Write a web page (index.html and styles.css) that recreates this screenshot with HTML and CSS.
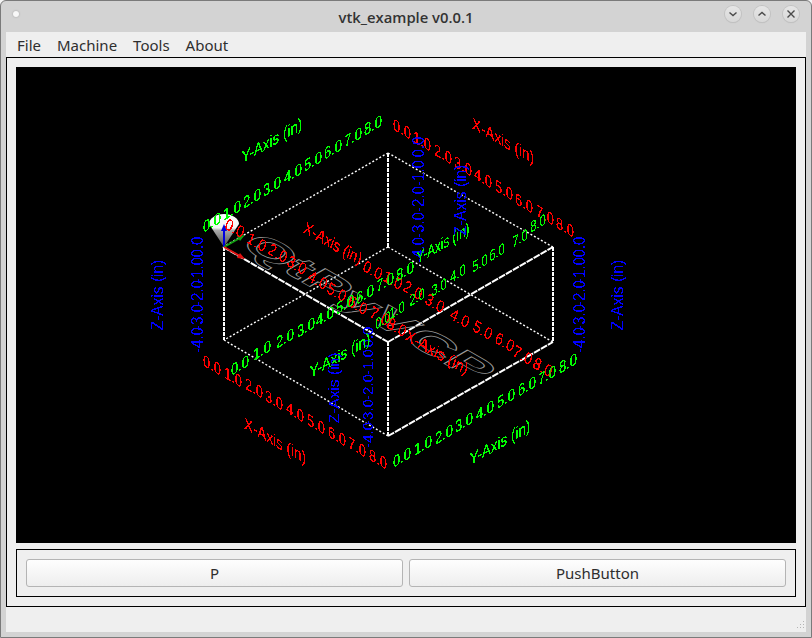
FILE: index.html
```html
<!DOCTYPE html>
<html lang="en">
<head>
    <meta charset="UTF-8">
    <title>vtk_example v0.0.1</title>
    <link rel="stylesheet" href="styles.css">
</head>
<body>
    <div class="window">
        <div class="titlebar">
            <span class="title-dot"></span>
            <span class="title">vtk_example v0.0.1</span>
            <div class="title-buttons">
                <span class="wm-button"><svg width="10" height="10" viewBox="0 0 10 10"><path d="M1.5 3.5 5 6.5 8.5 3.5"/></svg></span>
                <span class="wm-button"><svg width="10" height="10" viewBox="0 0 10 10"><path d="M1.5 6.5 5 3.5 8.5 6.5"/></svg></span>
                <span class="wm-button"><svg width="10" height="10" viewBox="0 0 10 10"><path d="M1.5 1.5 8.5 8.5M8.5 1.5 1.5 8.5"/></svg></span>
            </div>
        </div>
        <div class="client">
            <div class="menubar">
                <span class="menu-item">File</span>
                <span class="menu-item">Machine</span>
                <span class="menu-item">Tools</span>
                <span class="menu-item">About</span>
            </div>
            <div class="frame">
                <div class="viewport">
                    <svg class="scene" width="780" height="476" viewBox="16 67 780 476">
                        <defs>
                            <filter id="alias" x="0" y="0" width="100%" height="100%" filterUnits="userSpaceOnUse" primitiveUnits="userSpaceOnUse" color-interpolation-filters="sRGB">
                                <feComponentTransfer><feFuncA type="discrete" tableValues="0 0 1 1 1"/></feComponentTransfer>
                            </filter>
                            <linearGradient id="cone-top" x1="0" y1="0" x2="0" y2="1">
                                <stop offset="0" stop-color="#ffffff"/>
                                <stop offset="0.42" stop-color="#f4f4f4"/>
                                <stop offset="0.5" stop-color="#a8a8a8"/>
                                <stop offset="1" stop-color="#4a4a4a"/>
                            </linearGradient>
                        </defs>

                        <!-- box, far edges first -->
                        <g class="edge-thin">
                            <path d="M388 153 223 247M388 153 553 247M388 247 224 340M388 247 553 342M224 340 388 436"/>
                        </g>
                        <g class="edge-thick">
                            <path d="M223 247 388 342M388 342 553 247M388 436 553 342"/>
                        </g>
                        <g class="edge-post">
                            <path d="M388 153V247M224 247V340M553 247V342M388 342V436"/>
                        </g>

                        <text class="logo" transform="matrix(1.36 .78 -.85 .49 369 307)">QtPyVCP</text>

                        <!-- orientation marker -->
                        <path d="M224 247 209 224A15 10 0 0 1 239 224Z" fill="url(#cone-top)"/>
                        <path class="arrow-z" d="M224 247V228"/>
                        <path class="arrow-z-head" d="M224 224 221 231H227Z"/>
                        <path class="arrow-y" d="M224 247 240 238"/>
                        <path class="arrow-y-head" d="M245 235 237 236 240 241Z"/>
                        <path class="arrow-x" d="M224 247 240 256"/>
                        <path class="arrow-x-head" d="M245 259 237 258 240 253Z"/>

                        <g filter="url(#alias)">
                            <!-- X ticks, top right -->
                            <g class="red tick">
                                <text transform="matrix(.866 .5 0 1.1 402 129)">0.0</text>
                                <text transform="matrix(.866 .5 0 1.1 422 141)">1.0</text>
                                <text transform="matrix(.866 .5 0 1.1 443 154)">2.0</text>
                                <text transform="matrix(.866 .5 0 1.1 463 166)">3.0</text>
                                <text transform="matrix(.866 .5 0 1.1 483 178)">4.0</text>
                                <text transform="matrix(.866 .5 0 1.1 504 190)">5.0</text>
                                <text transform="matrix(.866 .5 0 1.1 524 203)">6.0</text>
                                <text transform="matrix(.866 .5 0 1.1 545 215)">7.0</text>
                                <text transform="matrix(.866 .5 0 1.1 565 227)">8.0</text>
                            </g>
                            <!-- X ticks, bottom left -->
                            <g class="red tick">
                                <text transform="matrix(.866 .5 0 1.1 212 365)">0.0</text>
                                <text transform="matrix(.866 .5 0 1.1 233 377)">1.0</text>
                                <text transform="matrix(.866 .5 0 1.1 254 388)">2.0</text>
                                <text transform="matrix(.866 .5 0 1.1 274 400)">3.0</text>
                                <text transform="matrix(.866 .5 0 1.1 295 412)">4.0</text>
                                <text transform="matrix(.866 .5 0 1.1 316 424)">5.0</text>
                                <text transform="matrix(.866 .5 0 1.1 337 436)">6.0</text>
                                <text transform="matrix(.866 .5 0 1.1 357 447)">7.0</text>
                                <text transform="matrix(.866 .5 0 1.1 378 459)">8.0</text>
                            </g>
                            <!-- X ticks, inner back -->
                            <g class="red tick">
                                <text transform="matrix(.866 .5 -.4 1 235 228)">0.0</text>
                                <text transform="matrix(.866 .5 -.4 1 257 242)">1.0</text>
                                <text transform="matrix(.866 .5 -.4 1 278 253)">2.0</text>
                                <text transform="matrix(.866 .5 -.4 1 297 265)">3.0</text>
                                <text transform="matrix(.866 .5 -.4 1 318 280)">4.0</text>
                                <text transform="matrix(.866 .5 -.4 1 337 292)">5.0</text>
                                <text transform="matrix(.866 .5 -.4 1 358 305)">6.0</text>
                                <text transform="matrix(.866 .5 -.4 1 380 316)">7.0</text>
                                <text transform="matrix(.866 .5 -.4 1 397 327)">8.0</text>
                            </g>
                            <!-- X ticks, inner front -->
                            <g class="red tick">
                                <text transform="matrix(.866 .5 -.4 1 373 270)">0.0</text>
                                <text transform="matrix(.866 .5 -.4 1 393 280)">1.0</text>
                                <text transform="matrix(.866 .5 -.4 1 413 290)">2.0</text>
                                <text transform="matrix(.866 .5 -.4 1 435 303)">3.0</text>
                                <text transform="matrix(.866 .5 -.4 1 460 318)">4.0</text>
                                <text transform="matrix(.866 .5 -.4 1 483 330)">5.0</text>
                                <text transform="matrix(.866 .5 -.4 1 505 342)">6.0</text>
                                <text transform="matrix(.866 .5 -.4 1 523 355)">7.0</text>
                                <text transform="matrix(.866 .5 -.4 1 543 367)">8.0</text>
                            </g>

                            <!-- Y ticks, top left -->
                            <g class="green tick">
                                <text transform="matrix(.866 -.5 0 1.1 212 222)">0.0</text>
                                <text transform="matrix(.866 -.5 0 1.1 232 210)">1.0</text>
                                <text transform="matrix(.866 -.5 0 1.1 252 198)">2.0</text>
                                <text transform="matrix(.866 -.5 0 1.1 272 186)">3.0</text>
                                <text transform="matrix(.866 -.5 0 1.1 293 173)">4.0</text>
                                <text transform="matrix(.866 -.5 0 1.1 313 161)">5.0</text>
                                <text transform="matrix(.866 -.5 0 1.1 333 149)">6.0</text>
                                <text transform="matrix(.866 -.5 0 1.1 353 137)">7.0</text>
                                <text transform="matrix(.866 -.5 0 1.1 373 125)">8.0</text>
                            </g>
                            <!-- Y ticks, bottom right -->
                            <g class="green tick">
                                <text transform="matrix(.866 -.5 0 1.1 402 457)">0.0</text>
                                <text transform="matrix(.866 -.5 0 1.1 423 445)">1.0</text>
                                <text transform="matrix(.866 -.5 0 1.1 444 434)">2.0</text>
                                <text transform="matrix(.866 -.5 0 1.1 464 422)">3.0</text>
                                <text transform="matrix(.866 -.5 0 1.1 485 410)">4.0</text>
                                <text transform="matrix(.866 -.5 0 1.1 506 398)">5.0</text>
                                <text transform="matrix(.866 -.5 0 1.1 527 386)">6.0</text>
                                <text transform="matrix(.866 -.5 0 1.1 547 375)">7.0</text>
                                <text transform="matrix(.866 -.5 0 1.1 568 363)">8.0</text>
                            </g>
                            <!-- Y ticks, inner front -->
                            <g class="green tick">
                                <text transform="matrix(.866 -.5 0 1.1 240 365)">0.0</text>
                                <text transform="matrix(.866 -.5 0 1.1 262 350)">1.0</text>
                                <text transform="matrix(.866 -.5 0 1.1 285 338)">2.0</text>
                                <text transform="matrix(.866 -.5 0 1.1 306 327)">3.0</text>
                                <text transform="matrix(.866 -.5 0 1.1 325 316)">4.0</text>
                                <text transform="matrix(.866 -.5 0 1.1 345 304)">5.0</text>
                                <text transform="matrix(.866 -.5 0 1.1 365 294)">6.0</text>
                                <text transform="matrix(.866 -.5 0 1.1 385 282)">7.0</text>
                                <text transform="matrix(.866 -.5 0 1.1 405 271)">8.0</text>
                            </g>
                            <!-- Y ticks, inner back -->
                            <g class="green tick">
                                <text transform="matrix(.75 -.43 0 1.05 383 320)">0.0</text>
                                <text transform="matrix(.75 -.43 0 1.05 397 310)">1.0</text>
                                <text transform="matrix(.75 -.43 0 1.05 417 297)">2.0</text>
                                <text transform="matrix(.75 -.43 0 1.05 439 287)">3.0</text>
                                <text transform="matrix(.75 -.43 0 1.05 458 273)">4.0</text>
                                <text transform="matrix(.75 -.43 0 1.05 480 263)">5.0</text>
                                <text transform="matrix(.75 -.43 0 1.05 497 252)">6.0</text>
                                <text transform="matrix(.75 -.43 0 1.05 520 238)">7.0</text>
                                <text transform="matrix(.75 -.43 0 1.05 538 223)">8.0</text>
                            </g>

                            <!-- Z ticks -->
                            <g class="blue tick">
                                <text transform="matrix(0 -1 1.1 0 197 340)">-4.0</text>
                                <text transform="matrix(0 -1 1.1 0 197 317)">-3.0</text>
                                <text transform="matrix(0 -1 1.1 0 197 293)">-2.0</text>
                                <text transform="matrix(0 -1 1.1 0 197 270)">-1.0</text>
                                <text transform="matrix(0 -1 1.1 0 197 247)">0.0</text>
                            </g>
                            <g class="blue tick">
                                <text transform="matrix(0 -1 1.1 0 579 340)">-4.0</text>
                                <text transform="matrix(0 -1 1.1 0 579 317)">-3.0</text>
                                <text transform="matrix(0 -1 1.1 0 579 293)">-2.0</text>
                                <text transform="matrix(0 -1 1.1 0 579 270)">-1.0</text>
                                <text transform="matrix(0 -1 1.1 0 579 247)">0.0</text>
                            </g>
                            <g class="blue tick">
                                <text transform="matrix(0 -1 1.1 0 418 250)">-4.0</text>
                                <text transform="matrix(0 -1 1.1 0 418 225)">-3.0</text>
                                <text transform="matrix(0 -1 1.1 0 418 199)">-2.0</text>
                                <text transform="matrix(0 -1 1.1 0 418 173)">-1.0</text>
                                <text transform="matrix(0 -1 1.1 0 418 147)">0.0</text>
                            </g>
                            <g class="blue tick">
                                <text transform="matrix(0 -1 1 0 367 435)">-4.0</text>
                                <text transform="matrix(0 -1 1 0 367 412)">-3.0</text>
                                <text transform="matrix(0 -1 1 0 367 387)">-2.0</text>
                                <text transform="matrix(0 -1 1 0 367 362)">-1.0</text>
                                <text transform="matrix(0 -1 1 0 367 337)">0.0</text>
                            </g>

                            <!-- axis titles -->
                            <g class="red axis-title">
                                <text transform="matrix(.866 .5 0 1.1 503 140)">X-Axis (in)</text>
                                <text transform="matrix(.866 .5 0 1.1 275 440)">X-Axis (in)</text>
                                <text transform="matrix(.8 .46 -.35 1 333 243)">X-Axis (in)</text>
                                <text transform="matrix(.866 .5 -.35 1 437 352)">X-Axis (in)</text>
                            </g>
                            <g class="green axis-title">
                                <text transform="matrix(.866 -.5 0 1.1 272 140)">Y-Axis (in)</text>
                                <text transform="matrix(.866 -.5 0 1.1 500 442)">Y-Axis (in)</text>
                                <text transform="matrix(.866 -.5 0 1.1 340 355)">Y-Axis (in)</text>
                                <text transform="matrix(.75 -.43 0 1.1 443 243)">Y-Axis (in)</text>
                            </g>
                            <g class="blue axis-title">
                                <text transform="matrix(0 -1 1.1 0 157 295)">Z-Axis (in)</text>
                                <text transform="matrix(0 -1 1.1 0 617 295)">Z-Axis (in)</text>
                                <text transform="matrix(0 -1 1.1 0 460 200)">Z-Axis (in)</text>
                                <text transform="matrix(0 -1 1 0 333 388)">Z-Axis (in)</text>
                            </g>
                        </g>
                    </svg>
                </div>
                <div class="panel">
                    <button class="push-button">P</button>
                    <button class="push-button">PushButton</button>
                </div>
            </div>
            <div class="statusbar">
                <svg class="grip" width="10" height="10" viewBox="0 0 10 10">
                    <path d="M8 1h1v1H8zM5 4h1v1H5zM8 4h1v1H8zM2 7h1v1H2zM5 7h1v1H5zM8 7h1v1H8z"/>
                </svg>
            </div>
        </div>
    </div>
</body>
</html>
```

FILE: styles.css
```css
html, body {
    margin: 0;
    background-color: #f4f4f4;
}
.window {
    display: flex;
    flex-direction: column;
    box-sizing: border-box;
    width: 812px;
    height: 638px;
    padding: 0 5px 5px;
    border: 1px solid #7a7a7a;
    border-radius: 6px 6px 0 0;
    background-color: #d3d3d3;
    font-family: 'Noto Sans', sans-serif;
    color: #2e2e2e;
}
.titlebar {
    position: relative;
    display: flex;
    align-items: center;
    justify-content: center;
    height: 31px;
    flex: none;
}
.title {
    font-family: 'Open Sans', sans-serif;
    font-size: 14.8px;
    font-weight: 600;
    color: #333333;
}
.title-dot {
    position: absolute;
    left: 7px;
    top: 10px;
    width: 6px;
    height: 6px;
    border-radius: 50%;
    background-color: #f8f8f8;
    box-shadow: 0 0 2px #9a9a9a;
}
.title-buttons {
    position: absolute;
    right: 7px;
    top: 5px;
    display: flex;
    gap: 13px;
}
.wm-button {
    display: flex;
    align-items: center;
    justify-content: center;
    width: 16px;
    height: 16px;
    border-radius: 50%;
    background: linear-gradient(#e6e6e6, #d8d8d8);
    box-shadow: 0 0 0 1px #c2c2c2, 0 1px 1px #bbbbbb;
}
.wm-button path {
    fill: none;
    stroke: #4a4a4a;
    stroke-width: 1.4;
}
.client {
    display: flex;
    flex-direction: column;
    flex: 1;
    background-color: #efefef;
}
.menubar {
    display: flex;
    align-items: center;
    height: 25px;
    padding-left: 3px;
    flex: none;
}
.menu-item {
    padding: 0 8px;
    font-size: 15px;
}
.frame {
    display: flex;
    flex-direction: column;
    gap: 6px;
    padding: 9px;
    border: 1px solid #000000;
    height: 550px;
    box-sizing: border-box;
}
.viewport {
    height: 476px;
    background-color: #000000;
}
.scene {
    display: block;
}
.panel {
    display: flex;
    gap: 6px;
    box-sizing: border-box;
    height: 48px;
    padding: 9px;
    border: 1px solid #000000;
}
.push-button {
    flex: 1;
    height: 28px;
    border: 1px solid #b4b4b4;
    border-radius: 3px;
    background: linear-gradient(#fefefe, #eeeeee);
    font-family: 'Noto Sans', sans-serif;
    font-size: 15px;
    color: #2e2e2e;
}
.statusbar {
    position: relative;
    flex: 1;
}
.grip {
    position: absolute;
    right: 1px;
    bottom: 2px;
    fill: #b4b4b4;
}

/* 3d scene */
.edge-thin path {
    fill: none;
    stroke: #ffffff;
    stroke-width: 1.4;
    stroke-dasharray: 2 2;
}
.edge-thick path {
    fill: none;
    stroke: #ffffff;
    stroke-width: 2;
    stroke-dasharray: 7 1;
}
.edge-post path {
    fill: none;
    stroke: #ffffff;
    stroke-width: 2;
    stroke-dasharray: 4 1;
    shape-rendering: crispEdges;
}
.logo {
    font-family: 'Liberation Sans', sans-serif;
    font-size: 40px;
    font-weight: bold;
    text-anchor: middle;
    dominant-baseline: central;
    fill: none;
    stroke: #9a9a9a;
    stroke-width: 0.8;
}
.tick text, .axis-title text {
    font-family: 'Liberation Sans', sans-serif;
    text-anchor: middle;
    dominant-baseline: central;
}
.tick {
    font-size: 15px;
}
.axis-title {
    font-size: 15.5px;
}
.red {
    fill: #ff0000;
}
.green {
    fill: #00ff00;
}
.blue {
    fill: #0000ff;
}
.arrow-z, .arrow-y, .arrow-x {
    fill: none;
    stroke-width: 2;
}
.arrow-z {
    stroke: #0000e0;
}
.arrow-y {
    stroke: #12a012;
}
.arrow-x {
    stroke: #e01010;
}
.arrow-z-head {
    fill: #0000e0;
}
.arrow-y-head {
    fill: #12a012;
}
.arrow-x-head {
    fill: #e01010;
}
```
